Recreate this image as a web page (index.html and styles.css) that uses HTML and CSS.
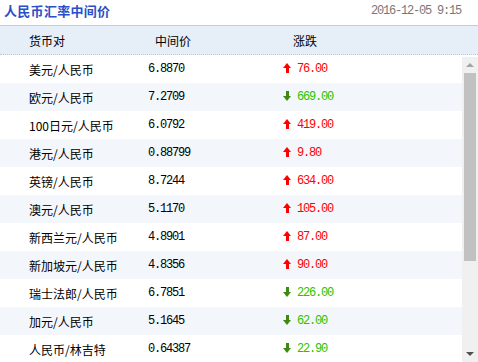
FILE: index.html
```html
<!DOCTYPE html>
<html lang="zh-CN">
<head>
    <meta charset="UTF-8">
    <title>人民币汇率中间价</title>
    <link rel="stylesheet" href="styles.css">
</head>
<body>
    <div class="page">
        <div class="topbar">
            <span class="title">人民币汇率中间价</span>
            <span class="time">2016-12-05 9:15</span>
        </div>
        <div class="head">
            <span class="c1">货币对</span>
            <span class="c2">中间价</span>
            <span class="c3">涨跌</span>
        </div>
        <div class="list">
            <div class="rows">
                <div class="row"><span class="c1">美元/人民币</span><span class="c2 num">6.8870</span><span class="c3 num up"><i class="arr"></i>76.00</span></div>
                <div class="row"><span class="c1">欧元/人民币</span><span class="c2 num">7.2709</span><span class="c3 num down"><i class="arr"></i>669.00</span></div>
                <div class="row"><span class="c1">100日元/人民币</span><span class="c2 num">6.0792</span><span class="c3 num up"><i class="arr"></i>419.00</span></div>
                <div class="row"><span class="c1">港元/人民币</span><span class="c2 num">0.88799</span><span class="c3 num up"><i class="arr"></i>9.80</span></div>
                <div class="row"><span class="c1">英镑/人民币</span><span class="c2 num">8.7244</span><span class="c3 num up"><i class="arr"></i>634.00</span></div>
                <div class="row"><span class="c1">澳元/人民币</span><span class="c2 num">5.1170</span><span class="c3 num up"><i class="arr"></i>105.00</span></div>
                <div class="row"><span class="c1">新西兰元/人民币</span><span class="c2 num">4.8901</span><span class="c3 num up"><i class="arr"></i>87.00</span></div>
                <div class="row"><span class="c1">新加坡元/人民币</span><span class="c2 num">4.8356</span><span class="c3 num up"><i class="arr"></i>90.00</span></div>
                <div class="row"><span class="c1">瑞士法郎/人民币</span><span class="c2 num">6.7851</span><span class="c3 num down"><i class="arr"></i>226.00</span></div>
                <div class="row"><span class="c1">加元/人民币</span><span class="c2 num">5.1645</span><span class="c3 num down"><i class="arr"></i>62.00</span></div>
                <div class="row"><span class="c1">人民币/林吉特</span><span class="c2 num">0.64387</span><span class="c3 num down"><i class="arr"></i>22.90</span></div>
            </div>
            <div class="scroll">
                <div class="btn"><i class="tri-up"></i></div>
                <div class="track"><div class="thumb"></div></div>
                <div class="btn"><i class="tri-down"></i></div>
            </div>
        </div>
    </div>
</body>
</html>
```

FILE: styles.css
```css
body {
    margin: 0;
    font-family: 'Noto Sans CJK SC', sans-serif;
    font-size: 12px;
    color: #000;
    background: #fff;
}
.page {
    width: 478px;
    height: 362px;
    overflow: hidden;
}
.topbar {
    height: 26px;
    display: flex;
    justify-content: space-between;
    align-items: flex-start;
    border-bottom: 1px solid #c4ccd8;
    box-sizing: border-box;
}
.title {
    padding-left: 4px;
    font-size: 13px;
    font-weight: bold;
    color: #2c4fc8;
    line-height: 22px;
    letter-spacing: 0.3px;
}
.time {
    padding-right: 17px;
    font-family: 'Liberation Mono', monospace;
    font-size: 12px;
    letter-spacing: -1.2px;
    color: #777;
    line-height: 22px;
}
.head {
    height: 28px;
    display: flex;
    align-items: center;
    background: #e6eff8;
    border-bottom: 1px dotted #b7c9e4;
}
.c1 {
    width: 119px;
    padding-left: 29px;
    flex-shrink: 0;
}
.c2 {
    width: 135px;
    flex-shrink: 0;
}
.c3 {
    flex: 1;
}
.head .c2 {
    padding-left: 7px;
    width: 128px;
}
.head .c3 {
    padding-left: 10px;
}
.list {
    display: flex;
    height: 307px;
}
.rows {
    flex: 1;
    overflow: hidden;
}
.row {
    height: 28px;
    display: flex;
    align-items: center;
}
.row:nth-child(even) {
    background: #f3f6fb;
}
.num {
    font-family: 'Liberation Mono', monospace;
    font-size: 12px;
    letter-spacing: -1.2px;
}
.up {
    color: #f00;
}
.down {
    color: #22c400;
}
.arr {
    display: inline-block;
    position: relative;
    width: 9px;
    height: 10px;
    margin-right: 5px;
    vertical-align: -1px;
}
.up .arr {
    background:
        linear-gradient(#f00, #f00) 3px 4px / 3px 6px no-repeat;
}
.up .arr::before {
    content: "";
    position: absolute;
    left: 0;
    top: 0;
    border-left: 4.5px solid transparent;
    border-right: 4.5px solid transparent;
    border-bottom: 5px solid #f00;
}
.down .arr {
    background:
        linear-gradient(#3d8a12, #3d8a12) 3px 0 / 3px 6px no-repeat;
}
.down .arr::before {
    content: "";
    position: absolute;
    left: 0;
    bottom: 0;
    border-left: 4.5px solid transparent;
    border-right: 4.5px solid transparent;
    border-top: 5px solid #3d8a12;
}
.scroll {
    width: 16px;
    display: flex;
    flex-direction: column;
    background: #f0f0f0;
    margin-top: 2px;
}
.btn {
    height: 16px;
    display: flex;
    align-items: center;
    justify-content: center;
}
.tri-up {
    border-left: 4px solid transparent;
    border-right: 4px solid transparent;
    border-bottom: 4px solid #a3a3a3;
}
.tri-down {
    border-left: 4px solid transparent;
    border-right: 4px solid transparent;
    border-top: 4px solid #505050;
}
.track {
    flex: 1;
    padding: 0 2px;
}
.thumb {
    height: 188px;
    background: #c1c1c1;
}
```
